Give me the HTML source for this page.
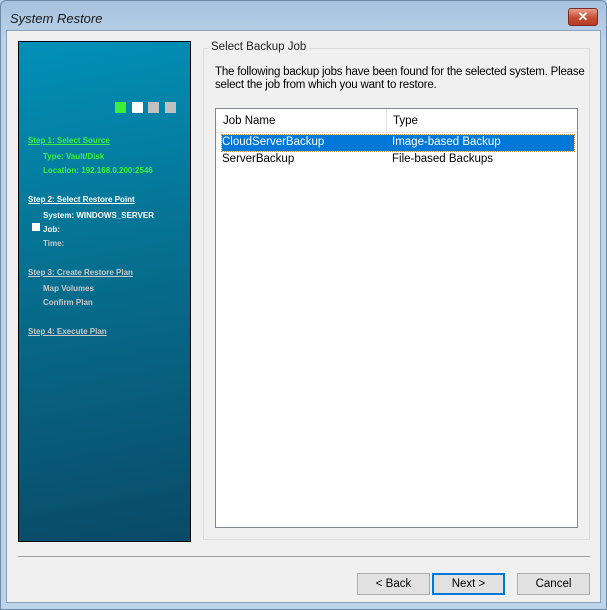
<!DOCTYPE html>
<html><head><style>
*{margin:0;padding:0;box-sizing:border-box}
body{width:607px;height:610px;background:#b9d1ea;font-family:"Liberation Sans",sans-serif;font-size:11.5px;position:relative;overflow:hidden}
.frame{position:absolute;left:0;top:0;width:607px;height:610px;background:linear-gradient(#a6c1de,#bcd3ea 40px,#bcd3ea);border:1px solid #6e8aa8;border-radius:6px 6px 0 0}
.title{position:absolute;left:10px;top:11px;font-style:italic;font-size:13px;color:#1a1a1a}
.close{position:absolute;left:568px;top:8px;width:30px;height:18px;border:1px solid #7a2a22;border-radius:3px;background:linear-gradient(#e7a090,#c8503a 50%,#b83a24);color:#fff;font-weight:bold;text-align:center;line-height:16px;font-size:13px}
.client{position:absolute;left:6px;top:30px;width:595px;height:573px;background:#f0f0f0;border:1px solid #8aa0b8}
.left{position:absolute;left:18px;top:41px;width:173px;height:501px;border:1px solid #000;background:linear-gradient(170deg,#0290b8 0%,#066f8f 45%,#0a4a68 100%)}
.sq{position:absolute;top:60px;width:11px;height:11px}
.l{position:absolute;font-size:8px;font-weight:bold;white-space:nowrap}
.u{text-decoration:underline}
.group{position:absolute;left:203px;top:48px;width:387px;height:492px;border:1px solid #dcdcdc}
.gt{position:absolute;left:208px;top:41px;background:#f0f0f0;padding:0 3px;color:#222}
.desc{position:absolute;left:215px;top:66px;width:385px;line-height:13px;color:#000;letter-spacing:-0.2px}
.list{position:absolute;left:215px;top:108px;width:363px;height:420px;border:1px solid #828790;background:#fff}
.hdr{position:absolute;left:0;top:0;width:361px;height:24px;border-bottom:1px solid #e5e5e5}
.row{position:absolute;left:6px;width:352px;height:16px;line-height:15px}
.sep{position:absolute;left:18px;top:556px;width:572px;height:1px;background:#a0a0a0}
.btn{position:absolute;top:573px;width:73px;height:22px;border:1px solid #adadad;background:#e1e1e1;text-align:center;line-height:20px;color:#000}
</style></head><body>
<div class="frame"></div>
<div class="title">System Restore</div>
<div class="close">✕</div>
<div class="client"></div>
<div class="left">
<div class="sq" style="left:96px;background:#3af03a"></div>
<div class="sq" style="left:113px;background:#fff"></div>
<div class="sq" style="left:129px;background:#c0c0c0"></div>
<div class="sq" style="left:146px;background:#c0c0c0"></div>
<div class="l u" style="left:9px;top:94px;color:#3af03a">Step 1: Select Source</div>
<div class="l" style="left:24px;top:110px;color:#3af03a">Type: Vault/Disk</div>
<div class="l" style="left:24px;top:124px;color:#3af03a">Location: 192.168.0.200:2546</div>
<div class="l u" style="left:9px;top:153px;color:#fff">Step 2: Select Restore Point</div>
<div class="l" style="left:24px;top:169px;color:#fff">System: WINDOWS_SERVER</div>
<div style="position:absolute;left:13px;top:181px;width:8px;height:8px;background:#fff"></div>
<div class="l" style="left:24px;top:183px;color:#fff">Job:</div>
<div class="l" style="left:24px;top:197px;color:#c8c8c8">Time:</div>
<div class="l u" style="left:9px;top:226px;color:#c8c8c8">Step 3: Create Restore Plan</div>
<div class="l" style="left:24px;top:242px;color:#c8c8c8">Map Volumes</div>
<div class="l" style="left:24px;top:256px;color:#c8c8c8">Confirm Plan</div>
<div class="l u" style="left:9px;top:285px;color:#c8c8c8">Step 4: Execute Plan</div>
</div>
<div class="group"></div>
<div class="gt">Select Backup Job</div>
<div class="desc">The following backup jobs have been found for the selected system. Please<br>select the job from which you want to restore.</div>
<div class="list">
<div class="hdr"><span style="position:absolute;left:7px;top:6px">Job Name</span><div style="position:absolute;left:170px;top:0;width:1px;height:24px;background:#e5e5e5"></div><span style="position:absolute;left:177px;top:6px">Type</span></div>
<div class="row" style="top:26px;background:#0078d7;color:#fff;outline:1px dotted #e08a30"><span style="position:absolute;left:0">CloudServerBackup</span><span style="position:absolute;left:170px">Image-based Backup</span></div>
<div class="row" style="top:43px"><span style="position:absolute;left:0">ServerBackup</span><span style="position:absolute;left:170px">File-based Backups</span></div>
</div>
<div class="sep"></div>
<div class="btn" style="left:357px">&lt; Back</div>
<div class="btn" style="left:432px;border:2px solid #0078d7;line-height:18px">Next &gt;</div>
<div class="btn" style="left:517px">Cancel</div>
</body></html>
